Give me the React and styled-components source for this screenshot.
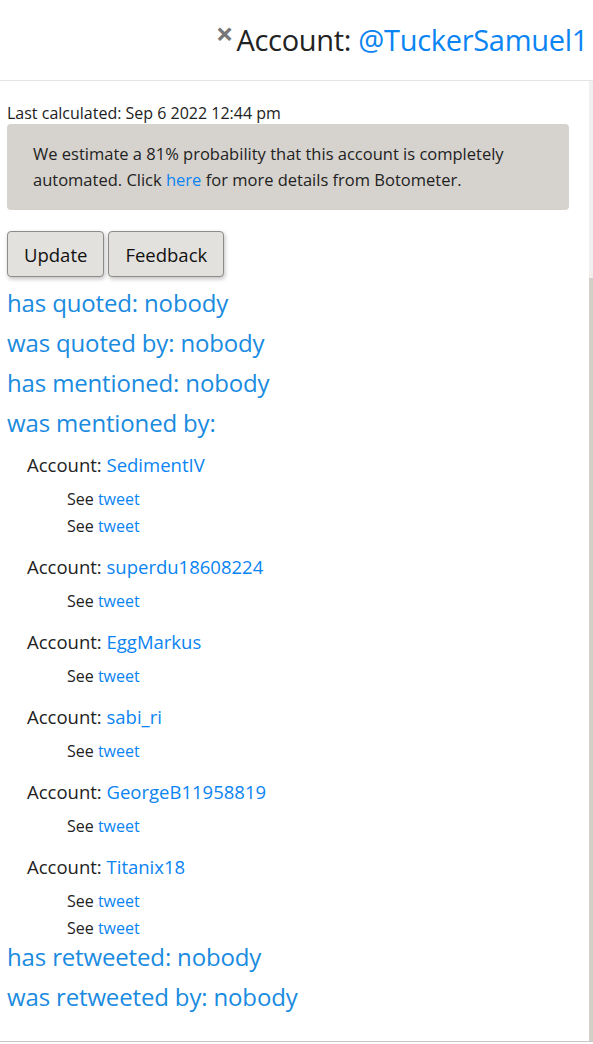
import styled, { createGlobalStyle } from 'styled-components';

const GlobalStyle = createGlobalStyle`
    html, body {
        margin: 0;
        padding: 0;
        background: #fff;
    }
    body {
        font-family: "Open Sans", "Noto Sans", sans-serif;
        color: #222;
    }
`;

const mentions = [
    { name: 'SedimentIV', tweets: 2 },
    { name: 'superdu18608224', tweets: 1 },
    { name: 'EggMarkus', tweets: 1 },
    { name: 'sabi_ri', tweets: 1 },
    { name: 'GeorgeB11958819', tweets: 1 },
    { name: 'Titanix18', tweets: 2 },
];

const Page = styled.div`
    display: flex;
    flex-direction: column;
    height: 1044px;
    overflow: hidden;
`;

const Header = styled.header`
    height: 81px;
    flex-shrink: 0;
    display: flex;
    justify-content: flex-end;
    align-items: flex-start;
    padding: 20px 5px 0 0;
    box-sizing: border-box;
    border-bottom: 1px solid #e4e4e4;
    white-space: nowrap;
`;

const Close = styled.span`
    font-size: 31px;
    line-height: 20px;
    font-weight: bold;
    color: #777;
    margin: 3px 3px 0 0;
`;

const Title = styled.h1`
    margin: 0;
    font-size: 29px;
    font-weight: normal;
    line-height: 40px;
    letter-spacing: -0.3px;
    color: #222;
`;

const Link = styled.a`
    color: #0a84f2;
    text-decoration: none;
`;

const Main = styled.div`
    flex: 1;
    display: flex;
    border-bottom: 1px solid #c6c6c6;
    margin-bottom: 2px;
    min-height: 0;
`;

const Content = styled.main`
    flex: 1;
    padding: 21px 20px 0 7px;
    overflow: hidden;
`;

const Track = styled.div`
    width: 4px;
    display: flex;
    flex-direction: column;
    background: #f1f0ee;
`;

const Thumb = styled.div`
    margin-top: 197px;
    flex: 1;
    background: #d2cfc9;
`;

const Stamp = styled.div`
    font-size: 16px;
    line-height: 22px;
`;

const Notice = styled.div`
    background: #d6d3ce;
    border-radius: 4px;
    padding: 17px 26px;
    font-size: 16.5px;
    line-height: 26px;
`;

const Buttons = styled.div`
    display: flex;
    gap: 4px;
    margin-top: 21px;
`;

const Button = styled.button`
    height: 46px;
    padding: 0 16px;
    font-family: inherit;
    font-size: 18.5px;
    color: #111;
    background: #e3e1dd;
    border: 1px solid #8f8c88;
    border-radius: 4px;
    box-shadow: 1px 2px 4px rgba(0, 0, 0, 0.25);
`;

const Relation = styled.h2`
    margin: 0;
    font-size: 24px;
    font-weight: normal;
    line-height: 40px;
    letter-spacing: -0.15px;
    color: #1a8be0;
`;

const Relations = styled.div`
    margin-top: 6px;
`;

const MentionList = styled.div`
    display: flex;
    flex-direction: column;
    gap: 12px;
    margin: 7px 0 -5px 20px;
`;

const Mention = styled.div`
    display: flex;
    flex-direction: column;
`;

const AccountLine = styled.div`
    font-size: 18.5px;
    line-height: 30px;
    margin-bottom: 6px;
`;

const TweetLine = styled.div`
    font-size: 16px;
    line-height: 27px;
    margin-left: 40px;
`;

export default function App() {
    return (
        <Page>
            <GlobalStyle />
            <Header>
                <Close>×</Close>
                <Title>Account: <Link href="#">@TuckerSamuel1</Link></Title>
            </Header>
            <Main>
                <Content>
                    <Stamp>Last calculated: Sep 6 2022 12:44 pm</Stamp>
                    <Notice>
                        We estimate a 81% probability that this account is completely automated. Click <Link href="#">here</Link> for more details from Botometer.
                    </Notice>
                    <Buttons>
                        <Button>Update</Button>
                        <Button>Feedback</Button>
                    </Buttons>
                    <Relations>
                        <Relation>has quoted: nobody</Relation>
                        <Relation>was quoted by: nobody</Relation>
                        <Relation>has mentioned: nobody</Relation>
                        <Relation>was mentioned by:</Relation>
                        <MentionList>
                            {mentions.map((m) => (
                                <Mention key={m.name}>
                                    <AccountLine>Account: <Link href="#">{m.name}</Link></AccountLine>
                                    {Array.from({ length: m.tweets }).map((_, i) => (
                                        <TweetLine key={i}>See <Link href="#">tweet</Link></TweetLine>
                                    ))}
                                </Mention>
                            ))}
                        </MentionList>
                        <Relation>has retweeted: nobody</Relation>
                        <Relation>was retweeted by: nobody</Relation>
                    </Relations>
                </Content>
                <Track>
                    <Thumb />
                </Track>
            </Main>
        </Page>
    );
}
